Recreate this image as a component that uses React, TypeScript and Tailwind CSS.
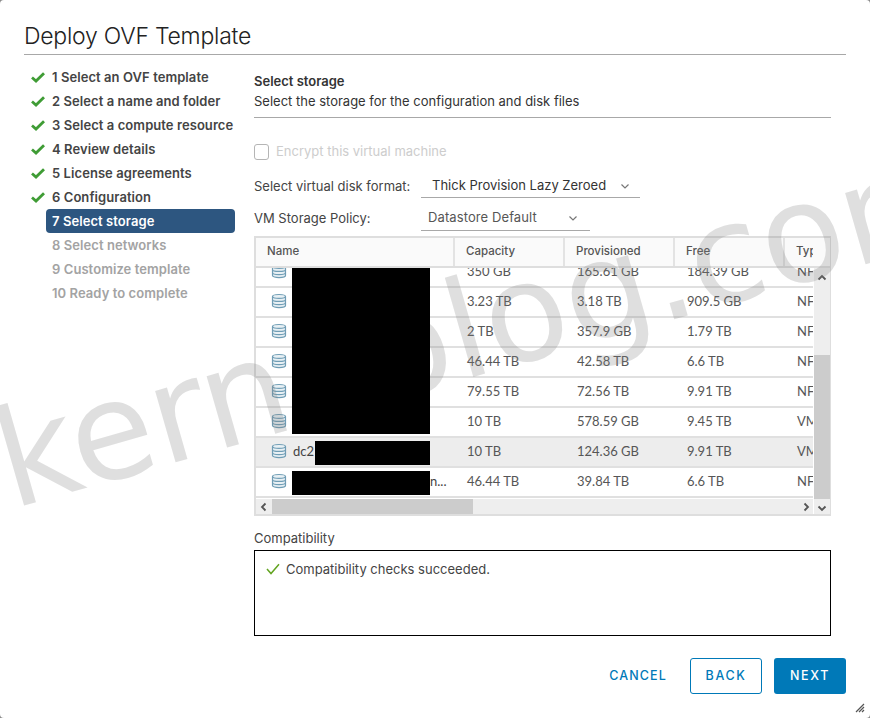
import React from 'react';

const steps = [
  { label: '1 Select an OVF template', state: 'done' },
  { label: '2 Select a name and folder', state: 'done' },
  { label: '3 Select a compute resource', state: 'done' },
  { label: '4 Review details', state: 'done' },
  { label: '5 License agreements', state: 'done' },
  { label: '6 Configuration', state: 'done' },
  { label: '7 Select storage', state: 'active' },
  { label: '8 Select networks', state: 'todo' },
  { label: '9 Customize template', state: 'todo' },
  { label: '10 Ready to complete', state: 'todo' },
];

const rows = [
  { name: '', capacity: '350 GB', provisioned: '165.61 GB', free: '184.39 GB', type: 'NFS' },
  { name: '', capacity: '3.23 TB', provisioned: '3.18 TB', free: '909.5 GB', type: 'NFS' },
  { name: '', capacity: '2 TB', provisioned: '357.9 GB', free: '1.79 TB', type: 'NFS' },
  { name: '', capacity: '46.44 TB', provisioned: '42.58 TB', free: '6.6 TB', type: 'NFS' },
  { name: '', capacity: '79.55 TB', provisioned: '72.56 TB', free: '9.91 TB', type: 'NFS' },
  { name: '', capacity: '10 TB', provisioned: '578.59 GB', free: '9.45 TB', type: 'VMFS' },
  { name: 'dc2', capacity: '10 TB', provisioned: '124.36 GB', free: '9.91 TB', type: 'VMFS', selected: true },
  { name: 'n...', capacity: '46.44 TB', provisioned: '39.84 TB', free: '6.6 TB', type: 'NFS' },
];

const Check = () => (
  <svg width="14" height="11" viewBox="0 0 14 11" className="shrink-0">
    <path d="M1 5.5 L5 9 L13 1.2" fill="none" stroke="#3f9c35" strokeWidth="2.8" />
  </svg>
);

const DatastoreIcon = () => (
  <svg width="16" height="16" viewBox="0 0 16 16" className="shrink-0">
    <path
      d="M1.5 3.5 C1.5 0.8 14.5 0.8 14.5 3.5 V12.5 C14.5 15.2 1.5 15.2 1.5 12.5 Z"
      fill="#e8f0f4"
      stroke="#6f9db5"
      strokeWidth="1.2"
    />
    <path
      d="M1.5 3.5 C1.5 6 14.5 6 14.5 3.5 M1.5 6.7 C1.5 9 14.5 9 14.5 6.7 M1.5 9.8 C1.5 12.2 14.5 12.2 14.5 9.8"
      fill="none"
      stroke="#6f9db5"
      strokeWidth="1.2"
    />
  </svg>
);

const Chevron = ({ dir = 'down', color = '#777', size = 10, width = 1.2 }: { dir?: string; color?: string; size?: number; width?: number }) => {
  const d = {
    down: 'M1.5 3.5 L5 7 L8.5 3.5',
    up: 'M1.5 6.5 L5 3 L8.5 6.5',
    left: 'M6.5 1.5 L3 5 L6.5 8.5',
    right: 'M3.5 1.5 L7 5 L3.5 8.5',
  }[dir];
  return (
    <svg width={size} height={size} viewBox="0 0 10 10" className="shrink-0">
      <path d={d} fill="none" stroke={color} strokeWidth={width} />
    </svg>
  );
};

export default function App() {
  return (
    <div className="relative w-[870px] h-[718px] overflow-hidden bg-[#8a8a8a] font-['Inter','Liberation_Sans',sans-serif]">
      <div className="w-full h-full bg-white rounded-[4px] flex flex-col">
        <div className="mx-6 h-[55px] flex items-end border-b border-[#a8a8a8] pb-[2px]">
          <h1 className="text-[23px] leading-8 font-light tracking-[-0.25px] text-[#222]">Deploy OVF Template</h1>
        </div>

        <div className="flex">
          <nav className="w-[254px] pt-[10px] pl-[46px] pr-[19px] shrink-0">
            {steps.map((step) => (
              <div
                key={step.label}
                className={`relative h-6 pl-[6px] pt-[2px] flex items-center text-[13px] font-semibold tracking-[0.07px] whitespace-nowrap rounded-[4px] ${
                  step.state === 'active'
                    ? 'bg-[#2d5680] text-white'
                    : step.state === 'done'
                      ? 'text-[#444]'
                      : 'text-[#a3a3a3]'
                }`}
              >
                {step.state === 'done' && (
                  <span className="absolute left-[-15px] top-[7px]">
                    <Check />
                  </span>
                )}
                {step.label}
              </div>
            ))}
          </nav>

          <main className="w-[577px] pt-[16px] text-[13px] text-[#444]">
            <div className="h-[47px] border-b border-[#a8a8a8]">
              <div className="h-5 leading-5 font-semibold text-[#333]">Select storage</div>
              <div className="h-5 leading-5 text-[#333]">Select the storage for the configuration and disk files</div>
            </div>

            <div className="mt-[26px] h-4 flex items-center gap-[7px]">
              <span className="w-[15px] h-4 border border-[#b5b5b5] rounded-[3px]" />
              <span className="text-[#cdcdcd]">Encrypt this virtual machine</span>
            </div>

            <div className="mt-[14px] flex">
              <div className="w-[167px] h-6 leading-6">Select virtual disk format:</div>
              <div className="w-[219px] h-6 pl-[11px] pr-[10px] flex items-center justify-between border-b border-[#a8a8a8] text-[#333]">
                <span>Thick Provision Lazy Zeroed</span>
                <Chevron />
              </div>
            </div>

            <div className="mt-[8px] flex">
              <div className="w-[167px] h-6 leading-6">VM Storage Policy:</div>
              <div className="w-[169px] h-[25px] pl-[7px] pr-[12px] flex items-center justify-between border-b border-[#a8a8a8] text-[#565656]">
                <span className="tracking-[0.1px]">Datastore Default</span>
                <Chevron />
              </div>
            </div>

            <div className="mt-[5px] h-[280px] border-2 border-[#dedede] border-r-[1px] font-['Lato','Liberation_Sans',sans-serif] text-[#565656] overflow-hidden">
              <div className="h-[30px] flex bg-[#fafafa] border-b-2 border-[#dedede] text-[11.5px] font-['Inter'] font-medium text-[#555] leading-[27px]">
                <div className="w-[197px] shrink-0 pl-[11px]">Name</div>
                <div className="w-[110px] shrink-0 pl-[11px] border-l-2 border-[#e3e3e3]">Capacity</div>
                <div className="w-[110px] shrink-0 pl-[11px] border-l-2 border-[#e3e3e3]">Provisioned</div>
                <div className="w-[110px] shrink-0 pl-[11px] border-l-2 border-[#e3e3e3]">Free</div>
                <div className="w-[30px] shrink-0 pl-[11px] border-l-2 border-[#e3e3e3] overflow-hidden">Type</div>
              </div>

              <div className="flex h-[248px]">
                <div className="w-[557px] shrink-0 flex flex-col">
                  <div className="h-[231px] overflow-hidden">
                    <div className="-mt-[10px]">
                      {rows.map((r) => (
                        <div
                          key={r.capacity + r.provisioned}
                          className={`h-[30px] flex items-center border-b-2 border-[#e0e0e0] overflow-hidden ${
                            r.selected ? 'bg-[#ededed]' : ''
                          }`}
                        >
                          <div className="w-[197px] shrink-0 pl-[15px] flex items-center gap-[6px] text-[#444]">
                            <span className="-mt-[3px]">
                              <DatastoreIcon />
                            </span>
                            <span className={r.name === 'n...' ? 'ml-[137px]' : ''}>{r.name}</span>
                          </div>
                          <div className="w-[110px] shrink-0 pl-[14px]">{r.capacity}</div>
                          <div className="w-[110px] shrink-0 pl-[14px]">{r.provisioned}</div>
                          <div className="w-[110px] shrink-0 pl-[14px]">{r.free}</div>
                          <div className="w-[30px] shrink-0 pl-[14px] overflow-hidden whitespace-nowrap">{r.type}</div>
                        </div>
                      ))}
                    </div>
                  </div>
                  <div className="h-[16px] bg-[#eeeeee] flex items-center">
                    <span className="w-[16px] flex justify-center">
                      <Chevron dir="left" color="#555" width={1.8} />
                    </span>
                    <div className="w-[201px] h-full bg-[#cccccc]" />
                    <span className="ml-auto mr-[2px] flex justify-center">
                      <Chevron dir="right" color="#555" width={1.8} />
                    </span>
                  </div>
                </div>
                <div className="w-[16px] ml-[1px] bg-[#eeeeee] flex flex-col">
                  <div className="h-[87px] pt-[5px] flex justify-center items-start">
                    <Chevron dir="up" color="#555" width={1.8} />
                  </div>
                  <div className="h-[144px] bg-[#cccccc]" />
                  <div className="flex-1 flex justify-center items-center">
                    <Chevron dir="down" color="#555" width={1.8} />
                  </div>
                </div>
              </div>
            </div>

            <div className="mt-[14px] h-4 leading-4">Compatibility</div>
            <div className="mt-[4px] h-[86px] border border-black px-[11px] pt-[10px] flex items-start gap-[6px]">
              <svg width="14" height="12" viewBox="0 0 14 12" className="shrink-0 mt-[2px]">
                <path d="M1 6 L5 10.5 L13 1.2" fill="none" stroke="#62a420" strokeWidth="1.5" />
              </svg>
              <span className="leading-4">Compatibility checks succeeded.</span>
            </div>
          </main>
        </div>

        <div className="mt-[22px] pr-6 flex justify-end items-center gap-3 text-[12.5px] font-medium tracking-[0.13em]">
          <button className="h-9 w-[72px] mr-[4px] text-[#0079b8] tracking-[0.09em]">CANCEL</button>
          <button className="h-9 w-[72px] border border-[#0079b8] rounded-[3px] text-[#0079b8]">BACK</button>
          <button className="h-9 w-[72px] bg-[#0079b8] rounded-[3px] text-white">NEXT</button>
        </div>
      </div>

      <svg width="10" height="10" viewBox="0 0 10 10" className="absolute right-[5px] bottom-[5px]">
        <path d="M1 9 L9 1 M4 9 L9 4 M7 9 L9 7" stroke="#555" strokeWidth="1.2" />
      </svg>

      {/* watermark sits over the dialog, redactions over everything */}
      <div className="absolute left-[20px] top-[386px] origin-bottom-left rotate-[-16deg] whitespace-nowrap pointer-events-none text-[136px] leading-[150px] text-[rgba(128,128,128,0.25)] font-['DejaVu_Sans',sans-serif]">
        kernoblog.com
      </div>

      <div className="absolute left-[292px] top-[268px] w-[138px] h-[166px] bg-black" />
      <div className="absolute left-[315px] top-[441px] w-[115px] h-6 bg-black" />
      <div className="absolute left-[292px] top-[471px] w-[138px] h-6 bg-black" />
    </div>
  );
}
